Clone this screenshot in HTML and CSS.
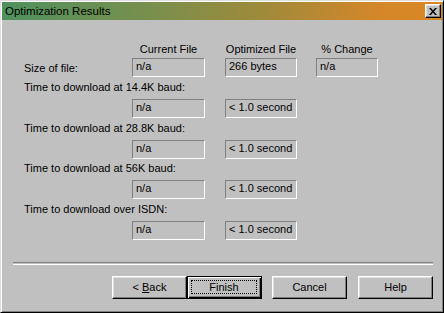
FILE: index.html
```html
<!DOCTYPE html>
<html>
<head>
<meta charset="utf-8">
<link rel="stylesheet" href="styles.css">
</head>
<body>
<div class="window">
  <div class="titlebar">
    <span class="title">Optimization Results</span>
    <span class="close-btn"><svg width="8" height="7" viewBox="0 0 8 7"><path d="M0 0h2l2 2.5L6 0h2L5 3.5 8 7H6L4 4.5 2 7H0l3-3.5z" fill="#000"/></svg></span>
  </div>
  <div class="body">
    <div class="grid head">
      <span></span>
      <span class="hcell w1">Current File</span>
      <span class="hcell w2">Optimized File</span>
      <span class="hcell w3">% Change</span>
    </div>
    <div class="grid first">
      <span class="label inline">Size of file:</span>
      <span class="box w1">n/a</span>
      <span class="box w2">266 bytes</span>
      <span class="box w3">n/a</span>
    </div>
    <div class="block">
      <div class="label">Time to download at 14.4K baud:</div>
      <div class="grid">
        <span></span>
        <span class="box w1">n/a</span>
        <span class="box w2">&lt; 1.0 second</span>
      </div>
    </div>
    <div class="block">
      <div class="label">Time to download at 28.8K baud:</div>
      <div class="grid">
        <span></span>
        <span class="box w1">n/a</span>
        <span class="box w2">&lt; 1.0 second</span>
      </div>
    </div>
    <div class="block b56">
      <div class="label">Time to download at 56K baud:</div>
      <div class="grid">
        <span></span>
        <span class="box w1">n/a</span>
        <span class="box w2">&lt; 1.0 second</span>
      </div>
    </div>
    <div class="block">
      <div class="label">Time to download over ISDN:</div>
      <div class="grid">
        <span></span>
        <span class="box w1">n/a</span>
        <span class="box w2">&lt; 1.0 second</span>
      </div>
    </div>
    <div class="sep"></div>
    <div class="buttons">
      <span class="btn"><span>&lt; <u>B</u>ack</span></span>
      <span class="btn default"><span class="focus">Finish</span></span>
      <span class="btn cancel">Cancel</span>
      <span class="btn help">Help</span>
    </div>
  </div>
</div>
</body>
</html>
```
FILE: styles.css
```css
html, body {
  margin: 0;
  padding: 0;
  background: #c0c0c0;
}
.window {
  width: 444px;
  height: 313px;
  box-sizing: border-box;
  border: 1px solid;
  border-color: #dfdfdf #000 #000 #dfdfdf;
  box-shadow: inset 1px 1px #fff, inset -1px -1px #808080;
  padding: 1px;
  background: #c0c0c0;
  font-family: "Liberation Sans", Arial, sans-serif;
  font-size: 11px;
  color: #000;
}
.titlebar {
  height: 18px;
  display: flex;
  align-items: center;
  justify-content: space-between;
  padding-left: 3px;
  background: linear-gradient(to right, #4f915e 0%, #7a8f4c 35%, #a08a3a 60%, #d4872a 85%, #dc8722 100%);
}
.title {
  font-size: 11.5px;
  line-height: 14px;
  color: #000;
}
.close-btn {
  width: 16px;
  height: 14px;
  box-sizing: border-box;
  margin-right: 1px;
  border: 1px solid;
  border-color: #fff #000 #000 #fff;
  box-shadow: inset -1px -1px #808080, inset 1px 1px #dfdfdf;
  background: #c0c0c0;
  display: flex;
  align-items: center;
  justify-content: center;
}
.close-btn svg { display: block; }
.body {
  padding: 23px 0 0 22px;
}
.grid {
  display: grid;
  grid-template-columns: 108px 93px 91px 62px;
  align-items: start;
}
.head {
  height: 13px;
  line-height: 13px;
  margin-bottom: 2px;
}
.hcell {
  text-align: center;
  white-space: nowrap;
}
.w1 { width: 73px; }
.w2 { width: 72px; }
.w3 { width: 62px; }
.box {
  height: 19px;
  box-sizing: border-box;
  border: 1px solid;
  border-color: #808080 #fff #fff #808080;
  padding: 0 0 0 3px;
  line-height: 14px;
  white-space: nowrap;
}
.label {
  height: 13px;
  line-height: 13px;
  white-space: nowrap;
}
.label.inline {
  padding-top: 4px;
}
.block {
  margin-top: 4px;
}
.block .label {
  margin-bottom: 5px;
}
.block.b56 { margin-top: 3px; }
.sep {
  margin: 22px 0 0 -11px;
  width: 420px;
  height: 1px;
  border-top: 1px solid #808080;
  border-bottom: 1px solid #fff;
}
.buttons {
  display: flex;
  margin: 11px 0 0 88px;
}
.btn {
  width: 75px;
  height: 23px;
  box-sizing: border-box;
  border: 1px solid;
  border-color: #fff #000 #000 #fff;
  box-shadow: inset -1px -1px #808080, inset 1px 1px #dfdfdf;
  display: flex;
  align-items: center;
  justify-content: center;
  line-height: 13px;
}
.btn.default {
  border-color: #000;
  box-shadow: inset 1px 1px #fff, inset -1px -1px #000, inset -2px -2px #808080;
  padding: 3px 4px 4px 3px;
}
.focus {
  flex: 1;
  align-self: stretch;
  border: 1px dotted #000;
  display: flex;
  align-items: center;
  justify-content: center;
}
.btn.cancel { margin-left: 10px; }
.btn.help { margin-left: 11px; }
```
